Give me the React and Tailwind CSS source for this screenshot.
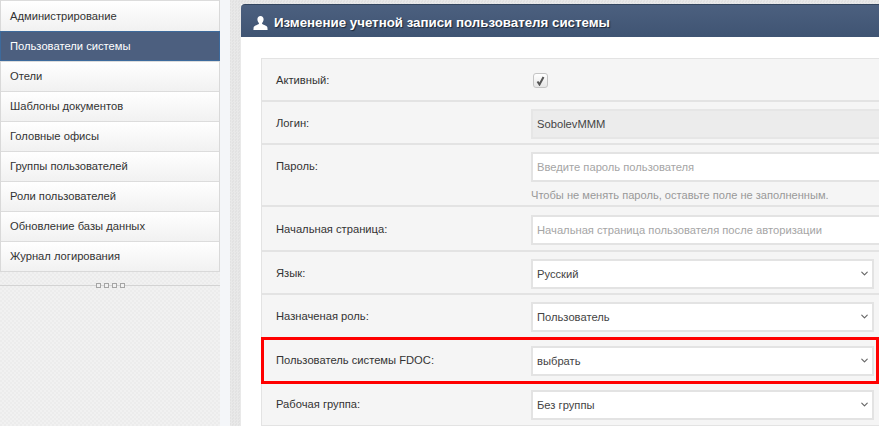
import { ChevronDown } from 'lucide-react'

const MENU = [
  'Администрирование',
  'Пользователи системы',
  'Отели',
  'Шаблоны документов',
  'Головные офисы',
  'Группы пользователей',
  'Роли пользователей',
  'Обновление базы данных',
  'Журнал логирования',
]

function Field({ label, h, pt = 'pt-[7px]', children }) {
  return (
    <div className={`grid grid-cols-[269px_1fr] border-b-2 border-[#e3e3e3] ${pt} ${h}`}>
      <div className="pl-[14px] h-[28px] leading-[28px] text-[#333]">{label}</div>
      <div>{children}</div>
    </div>
  )
}

function TextInput({ placeholder, value, disabled }) {
  return (
    <input
      readOnly
      disabled={disabled}
      placeholder={placeholder}
      value={value ?? ''}
      className={`block w-[370px] h-[30px] border-2 px-[4px] text-[11.2px] outline-none placeholder:text-[#a5a5a5] ${disabled ? 'bg-[#ececec] border-[#e6e6e6] text-[#444]' : 'bg-white border-[#e3e3e3]'}`}
    />
  )
}

function Select({ value }) {
  return (
    <div className="relative w-[343px]">
      <select className="block w-full h-[30px] bg-white border-2 border-[#e3e3e3] px-[4px] text-[11.2px] text-[#444] appearance-none outline-none">
        <option>{value}</option>
      </select>
      <ChevronDown size={11} strokeWidth={2.5} className="absolute right-[4px] top-[9px] text-[#666]" />
    </div>
  )
}

export default function App() {
  return (
    <div className="relative flex h-[426px] w-[879px] overflow-hidden bg-[#f4f6f9] text-[11.2px] text-[#333] font-['Liberation_Sans',Arial,sans-serif]">
      {/* Sidebar */}
      <aside className="w-[220px] shrink-0 h-full bg-[repeating-conic-gradient(#f1f1f1_0_25%,#ececec_0_50%)] bg-[size:4px_4px]">
        <nav className="border-x border-b border-[#d9d9d9]">
          {MENU.map((item, i) => (
            <div
              key={item}
              className={
                i === 1
                  ? 'h-[30px] leading-[28px] pl-[9px] bg-[#4c5f7f] text-white border border-[#3d6a9c] -mx-px'
                  : `${i === 0 ? 'h-[31px] leading-[31px]' : 'h-[30px] leading-[29px]'} pl-[9px] border-t border-[#dcdcdc] bg-gradient-to-b from-white to-[#f1f1f1]`
              }
            >
              {item}
            </div>
          ))}
        </nav>
        <div className="relative mt-[13px] border-t border-[#d3d3d3]">
          <div className="absolute left-[96px] -top-[3px] flex gap-[3px]">
            {[0, 1, 2, 3].map(i => (
              <span key={i} className="block w-[5px] h-[5px] border border-[#a5a5a5] bg-[#f1f1f1]" />
            ))}
          </div>
        </div>
      </aside>

      {/* Main */}
      <main className="ml-[10px] flex-1 min-w-0 pl-[11px] pt-[4px] bg-[#e8e8e8] bg-[repeating-conic-gradient(#e9e9e9_0_25%,#e2e2e2_0_50%)] bg-[size:3px_3px]">
        <div className="h-full bg-white">
          <div className="h-[33px] flex items-center pl-[12px] pt-[3px] gap-[6px] rounded-tl-[4px] bg-gradient-to-b from-[#4c607f] to-[#3f5473] border-t border-[#34465f]">
            <svg width="15" height="14" viewBox="0 0 15 14" fill="white">
              <path d="M7.5 0C5.6 0 4.4 1.4 4.4 3.3c0 1.5.6 2.9 1.5 3.7v1.1C4.2 9 1 9.7.6 11.6L.4 14h14.2l-.2-2.4C14 9.7 10.8 9 9.1 8.1V7c.9-.8 1.5-2.2 1.5-3.7C10.6 1.4 9.4 0 7.5 0z" />
            </svg>
            <h1 className="text-[13.3px] font-bold text-white whitespace-nowrap [text-shadow:1px_1px_1px_#1c2636]">
              Изменение учетной записи пользователя системы
            </h1>
          </div>

          <form className="ml-[20px] mt-[21px] w-[660px] bg-[#f5f5f5] border-l border-t border-[#e3e3e3]">
            <Field label="Активный:" h="h-[43px]">
              <div className="mt-[7px] ml-[2px] w-[15px] h-[15px] flex items-center justify-center rounded-[3px] border border-[#c4c4c4] bg-gradient-to-b from-white to-[#e6e6e6]">
                <svg width="9" height="10" viewBox="0 0 9 10" fill="none" stroke="#555" strokeWidth="2">
                  <path d="M1.5 5.5 3.5 8.5 7.5 1" />
                </svg>
              </div>
            </Field>
            <Field label="Логин:" h="h-[43px]">
              <TextInput value="SobolevMMM" disabled />
            </Field>
            <Field label="Пароль:" h="h-[62px]">
              <TextInput placeholder="Введите пароль пользователя" />
              <p className="mt-[5px] text-[11.1px] text-[#999]">Чтобы не менять пароль, оставьте поле не заполненным.</p>
            </Field>
            <Field label="Начальная страница:" h="h-[45px]" pt="pt-[8px]">
              <TextInput placeholder="Начальная страница пользователя после авторизации" />
            </Field>
            <Field label="Язык:" h="h-[43px]">
              <Select value="Русский" />
            </Field>
            <Field label="Назначеная роль:" h="h-[44px]">
              <Select value="Пользователь" />
            </Field>
            <Field label="Пользователь системы FDOC:" h="h-[44px]">
              <Select value="выбрать" />
            </Field>
            <Field label="Рабочая группа:" h="h-[44px]">
              <Select value="Без группы" />
            </Field>
          </form>
        </div>
      </main>

      {/* Red annotation */}
      <div className="absolute left-[261px] top-[337px] w-[618px] h-[47px] border-[3px] border-[#ff0000] pointer-events-none" />
    </div>
  )
}
